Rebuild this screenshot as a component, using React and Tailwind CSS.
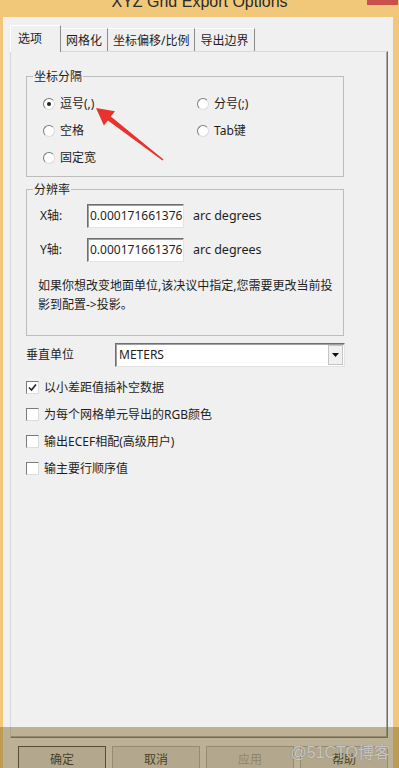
import React from 'react';

const Radio = ({ label, checked }) => (
  <div className="flex items-center gap-[5px] h-[27px]">
    <span className="w-[12px] h-[12px] rounded-full bg-white border border-t-[#7a7a7a] border-l-[#7a7a7a] border-r-[#dcdcdc] border-b-[#dcdcdc] flex items-center justify-center">
      {checked && <span className="w-[4px] h-[4px] rounded-full bg-[#222]" />}
    </span>
    <span>{label}</span>
  </div>
);

const Check = ({ label, checked }) => (
  <div className="flex items-center gap-[5px] h-[27px]">
    <span className="w-[13px] h-[13px] bg-white border border-t-[#7a7a7a] border-l-[#7a7a7a] border-r-[#dcdcdc] border-b-[#dcdcdc] flex items-center justify-center">
      {checked && (
        <svg width="9" height="9" viewBox="0 0 9 9">
          <path d="M1 4.5 L3.5 7 L8 1.5" stroke="#222" strokeWidth="1.6" fill="none" />
        </svg>
      )}
    </span>
    <span>{label}</span>
  </div>
);

const Group = ({ title, className, children }) => (
  <div className={`relative w-[318px] border border-[#bdbdbd] ${className}`}>
    <span className="absolute left-[6px] -top-[8px] px-[1px] bg-[#f0f0f0] leading-[16px]">{title}</span>
    {children}
  </div>
);

const Field = ({ value }) => (
  <div className="w-[97px] h-[24px] bg-white border border-t-[#6e6e6e] border-l-[#6e6e6e] border-r-[#e3e3e3] border-b-[#e3e3e3] shadow-[inset_1px_1px_0_#a0a0a0] flex items-center pl-[2px] overflow-hidden whitespace-nowrap">
    {value}
  </div>
);

const AxisRow = ({ label, className = '' }) => (
  <div className={`flex items-center h-[24px] ${className}`}>
    <span className="w-[47px]">{label}</span>
    <Field value="0.000171661376" />
    <span className="ml-[9px] text-[12.5px]">arc degrees</span>
  </div>
);

const tabs = ['网格化', '坐标偏移/比例', '导出边界'];
const buttons = [
  { label: '确定', cls: 'border-[#3c3c3c]' },
  { label: '取消', cls: 'border-[#adadad]' },
  { label: '应用', cls: 'border-[#adadad] text-[#a0a0a0]' },
  { label: '帮助', cls: 'border-[#adadad]' },
];

export default function App() {
  return (
    <div className="relative w-[399px] h-[768px] overflow-hidden bg-[#f1c87a] flex flex-col text-[12px] text-[#1e1e1e] font-['Noto_Sans','Noto_Sans_CJK_SC',sans-serif]">
      {/* title bar */}
      <div className="h-[17px] shrink-0 relative flex justify-center">
        <span className="-mt-[6px] h-[16px] leading-[16px] text-[16px] text-[#2b2b2b] font-['Liberation_Sans',sans-serif]">
          XYZ Grid Export Options
        </span>
        <div className="absolute right-[1px] top-0 w-[31px] h-[5px] bg-[#c9504b]" />
      </div>

      <div className="flex-1 ml-[3px] mr-[6px] bg-[#f0f0f0] pl-[7px] pr-[5px] flex flex-col">
        {/* tabs */}
        <div className="flex items-end h-[27px] mt-[8px] -mb-px">
          <div className="relative z-10 h-[27px] w-[51px] pl-[7px] pt-[5px] leading-[16px] bg-[#f0f0f0] border-t border-l border-white border-r border-r-[#8a8a8a]">
            选项
          </div>
          {tabs.map((t) => (
            <div
              key={t}
              className="h-[23px] mb-[1px] px-[5px] pt-[4px] leading-[16px] border-t border-t-white border-r border-r-[#8a8a8a]"
            >
              {t}
            </div>
          ))}
        </div>

        {/* panel */}
        <div className="h-[687px] shrink-0 border border-t-[#d9d9d9] border-l-[#d9d9d9] border-r-[#6f6f6f] border-b-[#6f6f6f] shadow-[inset_-1px_-1px_0_#a8a8a8] pl-[15px] pt-[24px] leading-[16px]">
          <Group title="坐标分隔" className="pt-[13px] pb-[5px] pl-[16px]">
            <div className="grid grid-cols-[154px_1fr]">
              <Radio label="逗号(,)" checked />
              <Radio label="分号(;)" />
              <Radio label="空格" />
              <Radio label="Tab键" />
              <Radio label="固定宽" />
            </div>
          </Group>

          <Group title="分辨率" className="mt-[12px] pt-[14px] pb-[21px] pl-[13px]">
            <AxisRow label="X轴:" />
            <AxisRow label="Y轴:" className="mt-[10px]" />
            <p className="mt-[14px] -ml-[2px] leading-[19px]">
              如果你想改变地面单位,该决议中指定,您需要更改当前投
              <br />
              影到配置-&gt;投影。
            </p>
          </Group>

          <div className="mt-[7px] flex items-center h-[24px]">
            <span className="w-[89px]">垂直单位</span>
            <div className="w-[230px] h-[24px] bg-white border border-t-[#6e6e6e] border-l-[#6e6e6e] border-r-[#e3e3e3] border-b-[#e3e3e3] shadow-[inset_1px_1px_0_#a0a0a0] flex items-center pl-[3px]">
              <span className="flex-1">METERS</span>
              <div className="w-[15px] h-[20px] mr-[1px] bg-[#f0f0f0] border border-[#c4c4c4] flex items-center justify-center">
                <svg width="7" height="4" viewBox="0 0 7 4">
                  <path d="M0 0 H7 L3.5 4 Z" fill="#111" />
                </svg>
              </div>
            </div>
          </div>

          <div className="mt-[7px]">
            <Check label="以小差距值插补空数据" checked />
            <Check label="为每个网格单元导出的RGB颜色" />
            <Check label="输出ECEF相配(高级用户)" />
            <Check label="输主要行顺序值" />
          </div>
        </div>

        {/* footer buttons */}
        <div className="flex justify-between pl-[8px] pt-[8px]">
          {buttons.map((b) => (
            <div
              key={b.label}
              className={`w-[88px] h-[28px] shrink-0 flex items-center justify-center bg-[#e1e1e1] border ${b.cls}`}
            >
              {b.label}
            </div>
          ))}
        </div>
      </div>

      {/* tinted band over the bottom */}
      <div className="absolute left-0 right-0 bottom-0 h-[41px] bg-[#7d6428]/45 pointer-events-none" />
      <div className="absolute right-[9px] bottom-[6px] leading-[18px] text-[16px] text-white/60 [text-shadow:0_0_1px_#6b6b6b] font-['Liberation_Sans','Noto_Sans_CJK_SC',sans-serif] pointer-events-none">
        @51CTO博客
      </div>

      {/* red annotation arrow */}
      <svg className="absolute left-[90px] top-[100px] pointer-events-none" width="80" height="66" viewBox="0 0 80 66">
        <polygon
          points="6,8 24.9,11.3 20.9,16.4 73.5,59.4 72.5,60.6 17.9,20.4 13.9,25.5"
          fill="#e8322c"
        />
      </svg>
    </div>
  );
}
